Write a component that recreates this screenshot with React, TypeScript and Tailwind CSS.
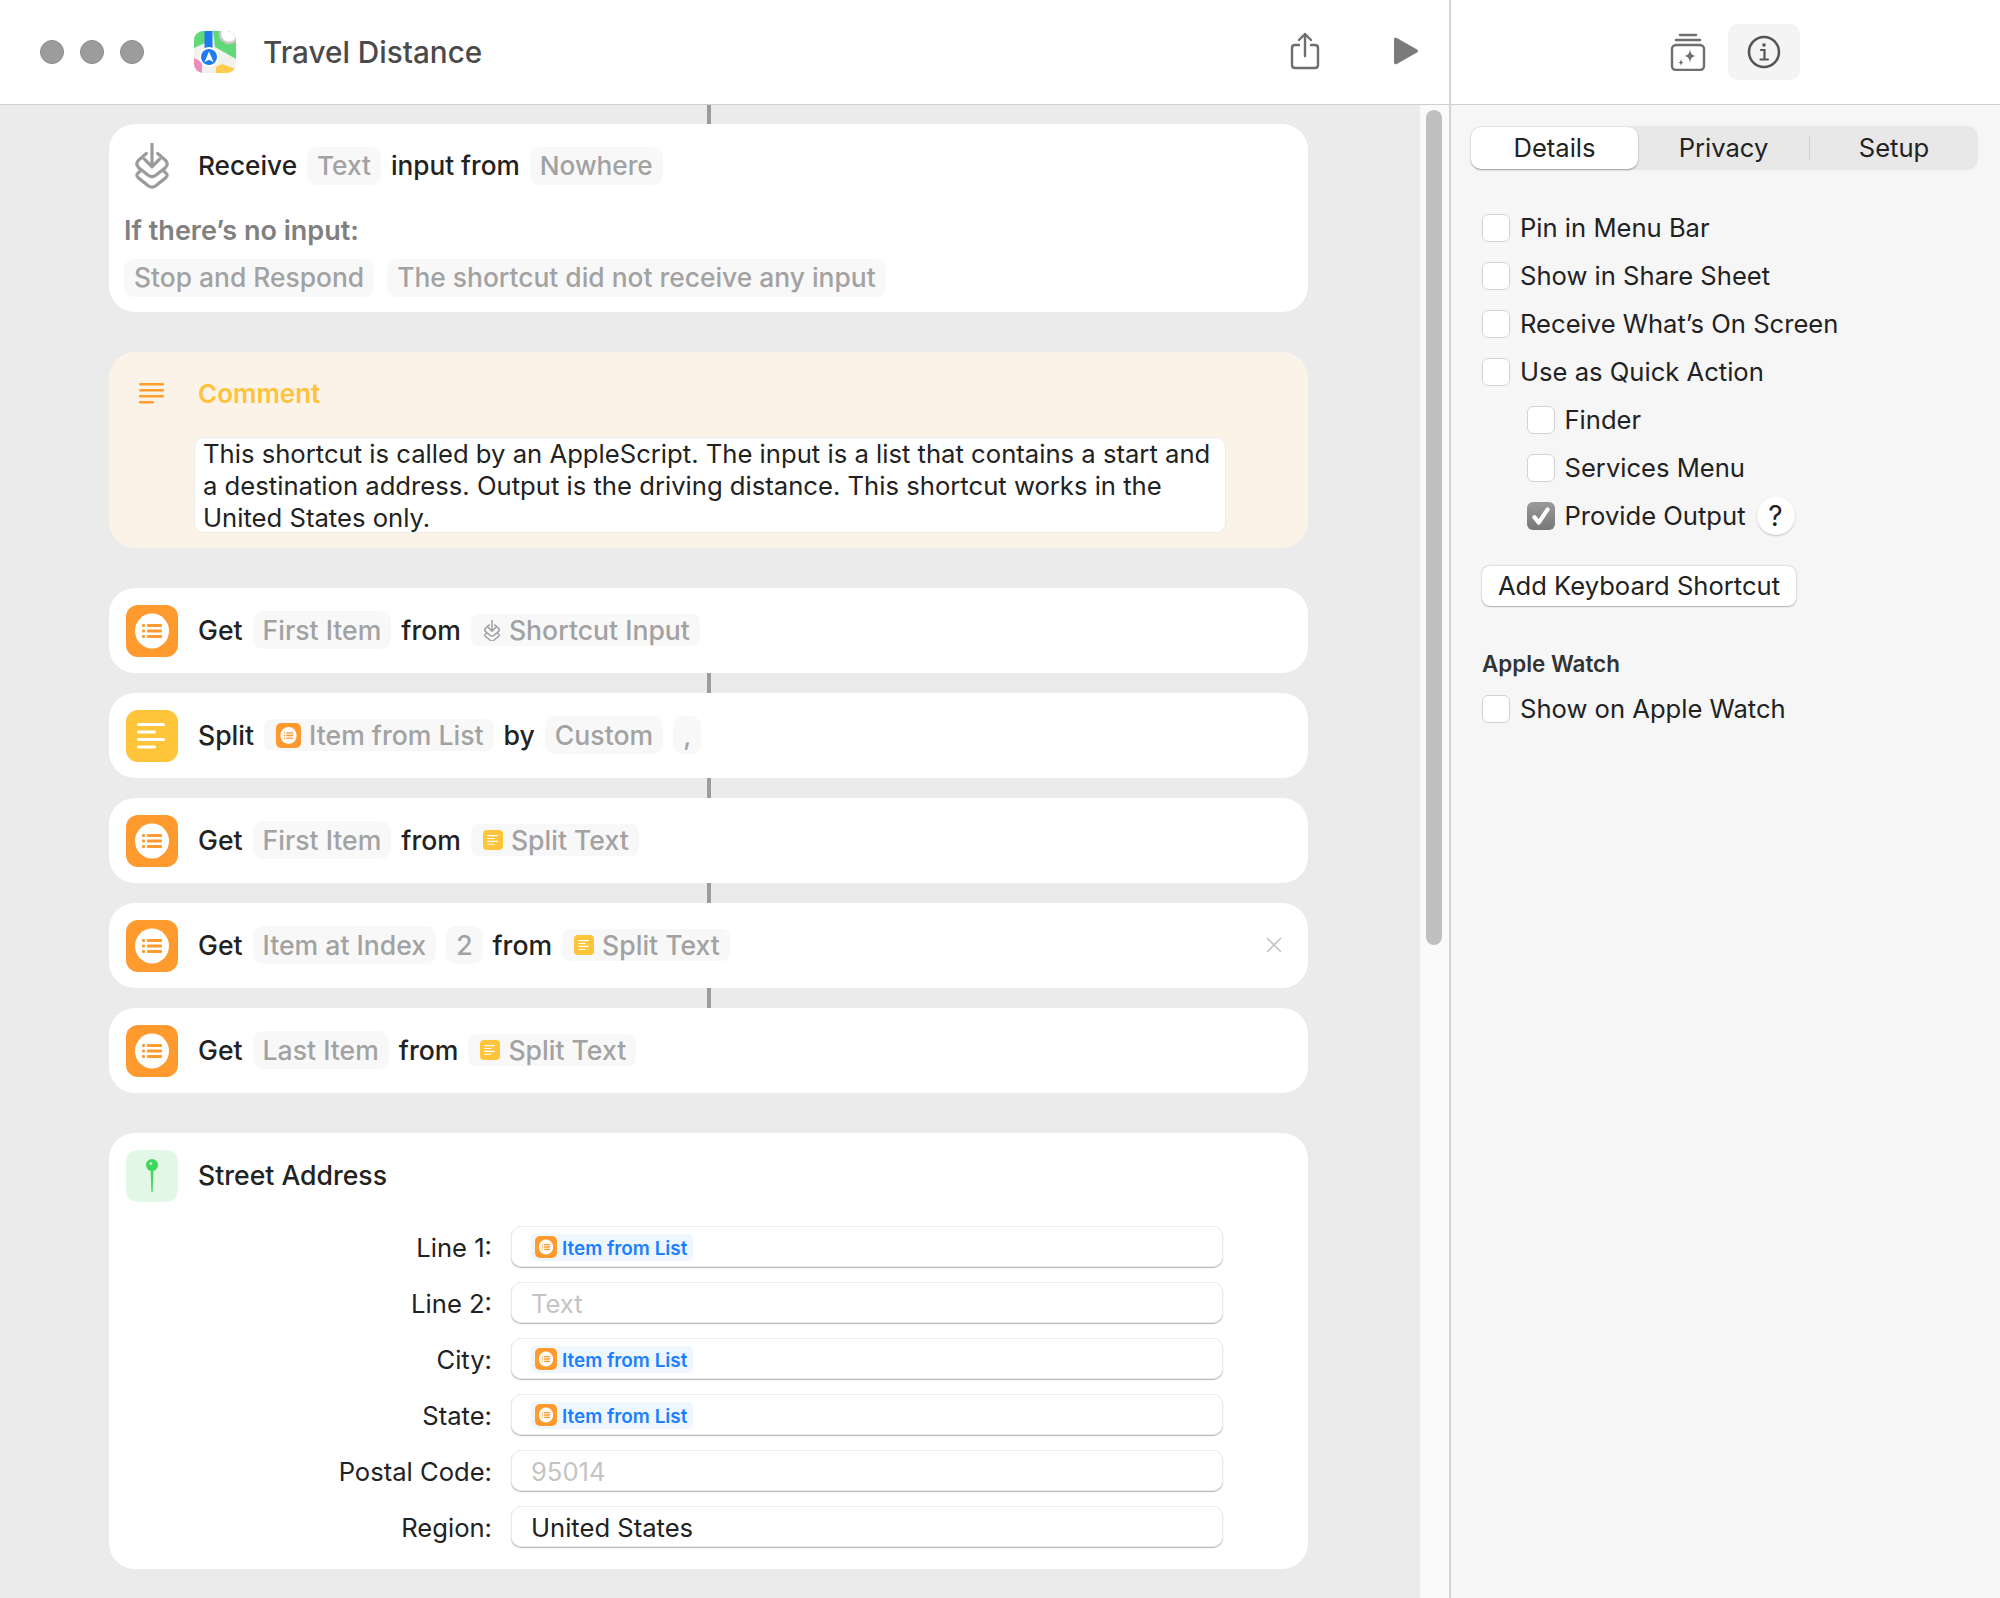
import React from 'react';

const ListIcon = ({ size = 52, radius = 12 }: { size?: number; radius?: number }) => (
  <svg width={size} height={size} viewBox="0 0 52 52" className="shrink-0">
    <rect width="52" height="52" rx={radius * (52 / size)} fill="#ff9a2f" />
    <ellipse cx="26" cy="26" rx="17" ry="17.5" fill="#fff" />
    <g fill="#ff9a2f">
      <rect x="16" y="19" width="3" height="3" rx="1" />
      <rect x="16" y="24.5" width="3" height="3" rx="1" />
      <rect x="16" y="30" width="3" height="3" rx="1" />
      <rect x="21" y="19" width="15" height="3" rx="1" />
      <rect x="21" y="24.5" width="15" height="3" rx="1" />
      <rect x="21" y="30" width="15" height="3" rx="1" />
    </g>
  </svg>
);

const TextIcon = ({ size = 52, radius = 12 }: { size?: number; radius?: number }) => (
  <svg width={size} height={size} viewBox="0 0 52 52" className="shrink-0">
    <rect width="52" height="52" rx={radius * (52 / size)} fill="#ffc53a" />
    <g fill="#fff">
      <rect x="11" y="13" width="28" height="3" rx="1.5" />
      <rect x="11" y="20.5" width="19" height="3" rx="1.5" />
      <rect x="11" y="28" width="28" height="3" rx="1.5" />
      <rect x="11" y="35.5" width="19" height="3" rx="1.5" />
    </g>
  </svg>
);

const InputGlyph = ({ size, color }: { size: number; color: string }) => (
  <svg width={size} height={size * 1.2} viewBox="0 0 40 48" fill="none" stroke={color} className="shrink-0">
    <path d="M14 11 L6 18 Q2 22 6 26 L16 34 Q20 37 24 34 L34 26 Q38 22 34 18 L26 11" strokeWidth="3.4" strokeLinecap="round" />
    <path d="M8 29 L6 31 Q2 34 6 37 L16 45 Q20 48 24 45 L34 37 Q38 34 34 31 L32 29" strokeWidth="3.4" strokeLinecap="round" />
    <path d="M20 1 V24 M12 17 L20 25 L28 17" strokeWidth="3.4" strokeLinecap="round" strokeLinejoin="round" />
  </svg>
);

const MapsIcon = () => (
  <svg width="42" height="42" viewBox="0 0 42 42" className="shrink-0">
    <defs>
      <clipPath id="maps-clip">
        <rect width="42" height="42" rx="9" />
      </clipPath>
    </defs>
    <g clipPath="url(#maps-clip)">
      <rect width="42" height="42" fill="#f1f1ee" />
      <path d="M0 0 H11 V12 L0 17 Z" fill="#62d978" />
      <path d="M19 0 H42 V28 L21 16 Z" fill="#62d978" />
      <circle cx="35" cy="3" r="9" fill="#fff" stroke="#c9c9c6" strokeWidth="2.5" />
      <rect x="10.5" y="0" width="8" height="20" fill="#1f7cf0" />
      <path d="M0 27 L8 31 V42 H0 Z" fill="#ee8cc0" />
      <path d="M22 36 L28 33 L42 38 V42 H22 Z" fill="#ffcc4d" />
      <circle cx="15" cy="26" r="10" fill="#fff" />
      <circle cx="15" cy="26" r="8" fill="#1f7cf0" />
      <path d="M15 20.5 L19.5 31 L15 28.8 L10.5 31 Z" fill="#fff" />
    </g>
  </svg>
);

const ShareIcon = () => (
  <svg width="32" height="38" viewBox="0 0 32 38" fill="none" stroke="#6e6e6e" strokeWidth="2.4" strokeLinecap="round" strokeLinejoin="round">
    <path d="M10 13 H6 Q3 13 3 16 V33 Q3 36 6 36 H26 Q29 36 29 33 V16 Q29 13 26 13 H22" />
    <path d="M16 24 V2 M10 8 L16 2 L22 8" />
  </svg>
);

const LibraryIcon = () => (
  <svg width="36" height="38" viewBox="0 0 36 38" fill="none" stroke="#6e6e6e" strokeWidth="2.4" strokeLinecap="round">
    <path d="M10 2 H26 M6 7 H30" />
    <rect x="2" y="12" width="32" height="25" rx="4" />
    <path d="M20 16 C20.8 21 21.6 22.2 26 23 C21.6 23.8 20.8 25 20 30 C19.2 25 18.4 23.8 14 23 C18.4 22.2 19.2 21 20 16 Z" fill="#6e6e6e" stroke="none" />
    <path d="M11 26 C11.4 28.6 11.9 29.1 14 29.5 C11.9 29.9 11.4 30.4 11 33 C10.6 30.4 10.1 29.9 8 29.5 C10.1 29.1 10.6 28.6 11 26 Z" fill="#6e6e6e" stroke="none" />
  </svg>
);

const InfoIcon = () => (
  <svg width="34" height="34" viewBox="0 0 34 34" fill="none" stroke="#555" strokeWidth="2.6" strokeLinecap="round">
    <circle cx="17" cy="17" r="15" />
    <circle cx="17" cy="10" r="1.8" fill="#555" stroke="none" />
    <path d="M14 15 H17.5 V24 M13.5 24.5 H21" strokeWidth="2.2" />
  </svg>
);

const Pill = ({ children }: { children: React.ReactNode }) => (
  <span className="flex h-[38px] items-center rounded-[10px] bg-[#f8f8f8] px-[10px] font-medium text-[#a2a2a2]">{children}</span>
);

const VarPill = ({ icon, children }: { icon: React.ReactNode; children: React.ReactNode }) => (
  <span className="flex h-[32px] items-center gap-[8px] rounded-[8px] bg-[#f8f8f8] pl-[12px] pr-[10px] font-medium text-[#a2a2a2]">
    {icon}
    {children}
  </span>
);

const Connector = () => <div className="ml-[598px] h-[20px] w-[4px] bg-[#9c9c9c]" />;

const Row = ({ icon, children }: { icon: React.ReactNode; children: React.ReactNode }) => (
  <div className="flex h-[85px] items-center rounded-[26px] bg-white pl-[17px] pr-[26px] text-[26.6px] font-medium text-[#222]">
    {icon}
    <div className="ml-[20px] flex flex-1 items-center gap-[10px]">{children}</div>
  </div>
);

const SplitText = () => (
  <VarPill icon={<TextIcon size={20} radius={4} />}>Split Text</VarPill>
);

const Field = ({ label, children }: { label: string; children: React.ReactNode }) => (
  <div className="flex items-center">
    <span className="w-[385px] pr-[19px] pt-[3px] text-right text-[25.6px] leading-[34px] text-[#222]">{label}</span>
    <div className="flex h-[41px] w-[712px] items-center rounded-[10px] border border-[#ececec] bg-white pl-[19px] text-[25.6px] leading-[34px] shadow-[0_1px_1px_rgba(0,0,0,0.3)]">
      {children}
    </div>
  </div>
);

const ItemToken = () => (
  <span className="mt-[1px] flex h-[27px] items-center gap-[5px] rounded-[5px] bg-[#eff6fe] pl-[4px] pr-[6px] text-[18.9px] font-semibold text-[#1a7fff]">
    <ListIcon size={22} radius={5} />
    <span className="pt-[4px]">Item from List</span>
  </span>
);

const Check = ({ label, indent, checked, children }: { label: string; indent?: boolean; checked?: boolean; children?: React.ReactNode }) => (
  <div className={`flex h-[48px] items-center ${indent ? 'pl-[55.5px]' : 'pl-[11px]'}`}>
    {checked ? (
      <span className="flex h-[28px] w-[28px] items-center justify-center rounded-[6px] bg-gradient-to-b from-[#9a9a9a] to-[#777]">
        <svg width="22" height="22" viewBox="0 0 20 20" fill="none" stroke="#fff" strokeWidth="3.8" strokeLinecap="round" strokeLinejoin="round">
          <path d="M4 11 L8 16 L16 4" />
        </svg>
      </span>
    ) : (
      <span className="h-[28px] w-[28px] rounded-[6px] border border-[#d2d2d2] bg-white" />
    )}
    <span className="ml-[10px] text-[25.6px] text-[#222]">{label}</span>
    {children}
  </div>
);

export default function App() {
  return (
    <div className="flex h-[1598px] w-[2000px] overflow-hidden bg-white [font-family:Inter,sans-serif]">
      <div className="flex w-[1449px] shrink-0 flex-col">
        <header className="flex h-[105px] shrink-0 items-center border-b border-[#cfcfcf] bg-white">
          <div className="ml-[40px] flex gap-[16px]">
            <span className="h-[24px] w-[24px] rounded-full border border-[#8c8c8c] bg-[#9c9c9c]" />
            <span className="h-[24px] w-[24px] rounded-full border border-[#8c8c8c] bg-[#9c9c9c]" />
            <span className="h-[24px] w-[24px] rounded-full border border-[#8c8c8c] bg-[#9c9c9c]" />
          </div>
          <div className="ml-[50px]">
            <MapsIcon />
          </div>
          <h1 className="ml-[27px] pt-[1px] text-[29.7px] font-medium text-[#4a4a4a]">Travel Distance</h1>
          <div className="mb-[3px] ml-auto mr-[30px] flex items-center gap-[72px]">
            <ShareIcon />
            <svg width="26" height="28" viewBox="0 0 26 28">
              <path d="M1 2.5 C1 1 2.5 0.4 3.8 1.1 L24 12.4 C25.3 13.2 25.3 14.8 24 15.6 L3.8 26.9 C2.5 27.6 1 27 1 25.5 Z" fill="#7a7a7a" />
            </svg>
          </div>
        </header>
        <div className="flex flex-1 bg-[#ebebeb]">
          <main className="w-[1420px] shrink-0 pl-[109px] pr-[112px]">
            <div className="ml-[598px] h-[19px] w-[4px] bg-[#9c9c9c]" />
            <section className="h-[188px] rounded-[26px] bg-white pl-[15px] pt-[23px]">
              <div className="flex h-[38px] items-center gap-[10px] text-[26.2px] font-medium text-[#222]">
                <span className="ml-[9px] mr-[17px]">
                  <InputGlyph size={38} color="#9b9b9b" />
                </span>
                Receive
                <Pill>Text</Pill>
                input from
                <Pill>Nowhere</Pill>
              </div>
              <p className="mt-[30px] text-[27px] font-semibold leading-[32px] text-[#808080]">If there’s no input:</p>
              <div className="mt-[12px] flex gap-[13px] text-[26.4px]">
                <Pill>Stop and Respond</Pill>
                <Pill>The shortcut did not receive any input</Pill>
              </div>
            </section>
            <section className="mt-[40px] h-[196px] rounded-[26px] bg-[#fbf3e8] pl-[30px] pt-[31px]">
              <div className="flex h-[21px] items-center">
                <svg width="25" height="21" viewBox="0 0 25 21" fill="#ff9f2e">
                  <rect y="0" width="25" height="2.4" rx="1.2" />
                  <rect y="6" width="25" height="2.4" rx="1.2" />
                  <rect y="12" width="25" height="2.4" rx="1.2" />
                  <rect y="18" width="15" height="2.4" rx="1.2" />
                </svg>
                <span className="ml-[34px] text-[26px] font-semibold text-[#ffc23a]">Comment</span>
              </div>
              <div className="ml-[55px] mt-[33px] h-[96px] w-[1032px] whitespace-nowrap rounded-[10px] border border-[#ececec] bg-white pl-[8px] text-[25.65px] leading-[32px] text-[#222]">
                This shortcut is called by an AppleScript. The input is a list that contains a start and
                <br />
                a destination address. Output is the driving distance. This shortcut works in the
                <br />
                United States only.
              </div>
            </section>
            <div className="mt-[40px]">
              <Row icon={<ListIcon />}>
                Get
                <Pill>First Item</Pill>
                from
                <VarPill icon={<InputGlyph size={18} color="#a2a2a2" />}>Shortcut Input</VarPill>
              </Row>
            </div>
            <Connector />
            <Row icon={<TextIcon />}>
              Split
              <VarPill icon={<ListIcon size={25} radius={5} />}>Item from List</VarPill>
              by
              <Pill>Custom</Pill>
              <Pill>,</Pill>
            </Row>
            <Connector />
            <Row icon={<ListIcon />}>
              Get
              <Pill>First Item</Pill>
              from
              <SplitText />
            </Row>
            <Connector />
            <Row icon={<ListIcon />}>
              Get
              <Pill>Item at Index</Pill>
              <Pill>2</Pill>
              from
              <SplitText />
              <svg width="16" height="16" viewBox="0 0 16 16" className="ml-auto" stroke="#c4c4c4" strokeWidth="1.6">
                <path d="M1 1 L15 15 M15 1 L1 15" />
              </svg>
            </Row>
            <Connector />
            <Row icon={<ListIcon />}>
              Get
              <Pill>Last Item</Pill>
              from
              <SplitText />
            </Row>
            <section className="mt-[40px] h-[436px] rounded-[26px] bg-white pl-[17px] pt-[17px]">
              <div className="flex items-center">
                <span className="flex h-[52px] w-[52px] items-center justify-center rounded-[12px] bg-[#e3f7e6]">
                  <svg width="12" height="34" viewBox="0 0 12 34">
                    <path d="M4.6 10 H7.4 L6.6 33 Q6 34 5.4 33 Z" fill="#3ed65c" />
                    <circle cx="6" cy="6" r="6" fill="#3ed65c" />
                    <circle cx="4.8" cy="4.6" r="1.5" fill="#c8f5d0" />
                  </svg>
                </span>
                <span className="ml-[20px] text-[26.6px] font-medium text-[#222]">Street Address</span>
              </div>
              <div className="mt-[24px] flex flex-col gap-[15px]">
                <Field label="Line 1:">
                  <ItemToken />
                </Field>
                <Field label="Line 2:">
                  <span className="pt-[3px] text-[#c4c4c4]">Text</span>
                </Field>
                <Field label="City:">
                  <ItemToken />
                </Field>
                <Field label="State:">
                  <ItemToken />
                </Field>
                <Field label="Postal Code:">
                  <span className="pt-[3px] text-[#c4c4c4]">95014</span>
                </Field>
                <Field label="Region:">
                  <span className="pt-[3px] text-[#222]">United States</span>
                </Field>
              </div>
            </section>
          </main>
          <div className="w-[29px] shrink-0 bg-[#fafafa] pl-[6px] pt-[5px]">
            <div className="h-[835px] w-[16px] rounded-full bg-[#c0c0c0]" />
          </div>
        </div>
      </div>
      <aside className="flex flex-1 flex-col border-l-2 border-[#d4d4d4]">
        <div className="flex h-[105px] shrink-0 items-center justify-center border-b border-[#cfcfcf] bg-white">
          <div className="ml-[18px] flex items-center gap-[22px]">
            <LibraryIcon />
            <span className="flex h-[56px] w-[72px] items-center justify-center rounded-[10px] bg-[#f4f4f4]">
              <InfoIcon />
            </span>
          </div>
        </div>
        <div className="flex-1 bg-[#f6f6f6] pl-[20px] pr-[22px] pt-[21px]">
          <div className="relative flex h-[44px] items-center rounded-[10px] bg-[#e8e8e8] text-[25.6px] text-[#222]">
            <span className="flex h-[42px] w-[167px] items-center justify-center rounded-[10px] bg-white shadow-[0_1px_2px_rgba(0,0,0,0.35)]">Details</span>
            <span className="flex h-[42px] w-[171px] items-center justify-center">Privacy</span>
            <span className="h-[24px] w-[1px] bg-[#cfcfcf]" />
            <span className="flex h-[42px] flex-1 items-center justify-center">Setup</span>
          </div>
          <div className="mt-[34px]">
            <Check label="Pin in Menu Bar" />
            <Check label="Show in Share Sheet" />
            <Check label="Receive What’s On Screen" />
            <Check label="Use as Quick Action" />
            <Check label="Finder" indent />
            <Check label="Services Menu" indent />
            <Check label="Provide Output" indent checked>
              <span className="ml-[11px] flex h-[38px] w-[38px] items-center justify-center rounded-full bg-white text-[28px] text-[#222] shadow-[0_1px_2px_rgba(0,0,0,0.2)]">?</span>
            </Check>
          </div>
          <button className="ml-[11px] mt-[26px] flex h-[40px] w-[314px] items-center justify-center rounded-[8px] bg-white text-[25.6px] text-[#222] shadow-[0_0_2px_rgba(0,0,0,0.3),0_1px_1px_rgba(0,0,0,0.2)]">
            Add Keyboard Shortcut
          </button>
          <p className="ml-[11px] mt-[44px] text-[22.4px] font-semibold leading-[28px] text-[#333]">Apple Watch</p>
          <div className="mt-[7px]">
            <Check label="Show on Apple Watch" />
          </div>
        </div>
      </aside>
    </div>
  );
}
